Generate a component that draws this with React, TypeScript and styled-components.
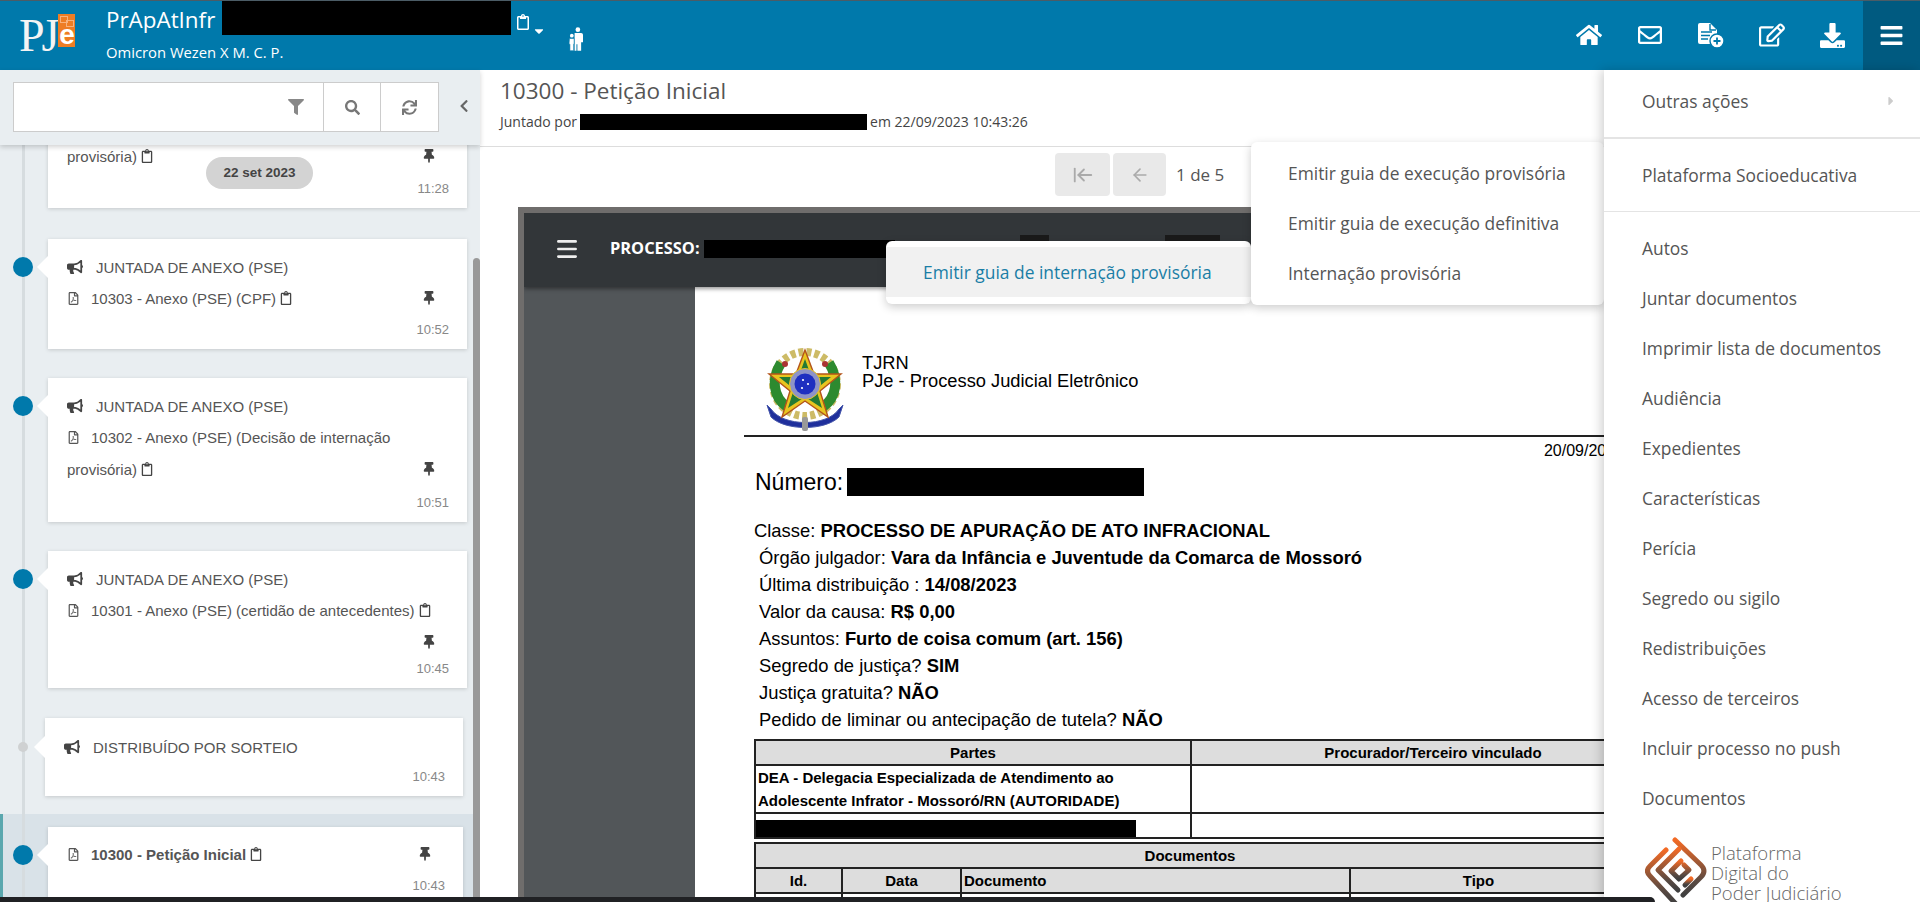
import React from "react";
import styled, { createGlobalStyle } from "styled-components";
import {
  FaHome, FaRegEnvelope, FaRegEdit, FaDownload, FaBars, FaFilter, FaSearch, FaSync,
  FaChevronLeft, FaRegClipboard, FaBullhorn, FaThumbtack, FaRegFilePdf, FaCaretDown, FaCaretRight,
} from "react-icons/fa";
import { ArrowLeft, ArrowLeftToLine, Menu } from "lucide-react";

const Global = createGlobalStyle`
  html, body { margin: 0; padding: 0; height: 100%; overflow: hidden; background: #fff; }
  * { box-sizing: border-box; }
  body { font-family: "Open Sans", "Liberation Sans", sans-serif; color: #555; }
`;

const Page = styled.div`
  position: relative; width: 1920px; height: 902px; overflow: hidden; display: flex; flex-direction: column;
`;
const Header = styled.header`
  flex: 0 0 70px; display: flex; background: #0079ab; border-top: 1px solid #4b5c66; color: #fff;
`;
const LogoBox = styled.div`
  width: 106px; padding: 13px 0 0 19px; display: flex; align-items: flex-start;
`;
const LogoPJ = styled.span`
  font-family: "Liberation Serif", serif; font-size: 46px; line-height: 38px; letter-spacing: -3px; color: #f4f4f4; margin-top: 3px;
`;
const LogoE = styled.span`
  position: relative; margin-left: 2px; width: 17px; height: 33px; background: #ee7d24; color: #fff;
  font-family: "Liberation Sans", sans-serif; font-size: 28px; line-height: 42px; font-weight: 700; text-align: center; overflow: hidden;
  &::before { content: ""; position: absolute; left: 2px; top: 2px; width: 6px; height: 5px; border: 1px solid #f8b27c; }
  &::after { content: ""; position: absolute; left: 8px; top: 6px; width: 6px; height: 5px; border: 1px solid #f8b27c; }
`;
const TitleBlock = styled.div`
  display: flex; flex-direction: column;
`;
const TitleRow = styled.div`
  display: flex; align-items: flex-start; height: 34px;
`;
const Title = styled.span`
  width: 116px; font-size: 22.4px; line-height: 26px; padding-top: 6px; white-space: nowrap;
`;
const HeaderRedact = styled.div`
  width: 289px; height: 34px; background: #000;
`;
const ClipBtn = styled.div`
  margin: 13px 0 0 4px; display: flex; font-size: 16px; color: #fff;
`;
const Caret = styled.div`
  margin: 23px 0 0 1px; font-size: 14px; line-height: 14px; color: #fff;
`;
const ChildIcon = styled.svg`
  margin: 26px 0 0 23px; flex: none;
`;
const SubTitle = styled.div`
  font-size: 14.8px; line-height: 18px; margin-top: 8px; font-weight: 400;
`;
const HeaderIcons = styled.nav`
  margin-left: auto; display: flex;
`;
const HeaderIcon = styled.div<{ $size?: number }>`
  width: 61px; display: flex; align-items: center; justify-content: center; font-size: ${p => p.$size ?? 26}px; padding-bottom: 1px;
`;
const MenuButton = styled.div`
  width: 57px; background: #005a80; display: flex; align-items: center; justify-content: center; font-size: 25px;
`;
const Body = styled.div`
  flex: 1; display: flex; min-height: 0;
`;
const Sidebar = styled.aside`
  position: relative; width: 480px; background: #e9eef1; display: flex; flex-direction: column; flex: none;
`;
const SearchPanel = styled.div`
  position: relative; z-index: 2; flex: 0 0 75px; display: flex; align-items: flex-start; padding: 12px 0 0 13px;
  background: #e9eef1; box-shadow: 0 2px 5px rgba(0,0,0,.18);
`;
const SearchBox = styled.div`
  width: 426px; height: 50px; background: #fff; border: 1px solid #ccc; display: flex;
`;
const SearchInput = styled.div`
  flex: 1; display: flex; align-items: center; justify-content: flex-end; padding-right: 19px; color: #888; font-size: 16px;
`;
const SearchBtn = styled.div<{ $w: number }>`
  width: ${p => p.$w}px; border-left: 1px solid #ccc; display: flex; align-items: center; justify-content: center; color: #777; font-size: 15px;
`;
const Collapse = styled.div`
  margin: 17px 0 0 18px; color: #666; font-size: 14px; line-height: 14px;
`;
const Timeline = styled.div`
  position: relative; flex: 1; overflow: hidden; font-family: "Liberation Sans", sans-serif;
  &::before { content: ""; position: absolute; z-index: 1; left: 22px; top: 0; bottom: 0; width: 3px; background: #d6dcdf; }
`;
const Thumb = styled.div`
  position: absolute; z-index: 3; right: 0; top: 113px; bottom: -10px; width: 7px; background: #999; border-radius: 4px 4px 0 0;
`;
const Item = styled.div<{ $top: number; $left: number; $right?: number; $active?: boolean }>`
  position: relative; padding: ${p => p.$top}px ${p => p.$right ?? 13}px 0 ${p => p.$left}px;
  ${p => p.$active ? "background: #d9e2e8; padding-bottom: 40px; margin-right: 7px; padding-right: 10px; box-shadow: inset 3px 0 0 #5aa7ae;" : ""}
`;
const ItemSpacer = styled.div`
  height: 18px;
`;
const Dot = styled.span<{ $y: number; $small?: boolean }>`
  position: absolute; z-index: 2; left: ${p => p.$small ? 18 : 13}px; top: ${p => p.$y - (p.$small ? 5 : 10)}px;
  width: ${p => p.$small ? 10 : 20}px; height: ${p => p.$small ? 10 : 20}px; border-radius: 50%;
  background: ${p => p.$small ? "#cfd1d2" : "#0079ab"};
`;
const Card = styled.div<{ $pad?: number; $clip?: number }>`
  position: relative; background: #fff; box-shadow: 0 1px 4px rgba(0,0,0,.16);
  padding: ${p => p.$pad ?? 12}px 18px 10px 19px;
  margin-top: ${p => p.$clip ?? 0}px; color: #555;
  &::before {
    content: ""; position: absolute; left: -11px; top: ${p => (p.$pad ?? 12) + 4}px; width: 12px; height: 24px;
    background: #fff; clip-path: polygon(100% 0, 100% 100%, 0 50%);
  }
`;
const ClippedCard = styled(Card)`
  &::before { display: none; }
`;
const Heading = styled.div`
  height: 32px; display: flex; align-items: center; font-size: 15px; color: #555; white-space: nowrap;
  & > svg { font-size: 16px; color: #444; margin-right: 13px; flex: none; }
`;
const Doc = styled.div<{ $bold?: boolean }>`
  line-height: 32px; font-size: 15px; font-weight: ${p => p.$bold ? 700 : 400}; color: #555;
  display: flow-root;
`;
const PdfIcon = styled(FaRegFilePdf)`
  font-size: 13px; color: #555; margin-right: 11px; vertical-align: -1px;
`;
const ClipIcon = styled(FaRegClipboard)`
  font-size: 14px; color: #444; margin-left: 3px; vertical-align: -1px;
`;
const Pin = styled.span`
  float: right; margin-right: 13px; width: 14px; height: 32px; display: flex; align-items: center; justify-content: center; font-size: 14px; color: #444; padding-bottom: 2px;
`;
const Time = styled.div<{ $gap: number }>`
  margin-top: ${p => p.$gap}px; height: 18px; line-height: 18px; text-align: right; font-size: 13px; color: #888;
`;
const Pill = styled.div`
  position: absolute; z-index: 1; left: 206px; top: 12px; width: 107px; height: 32px; border-radius: 16px;
  background: #d3d3d3; color: #444; font-size: 13.5px; font-weight: 700; text-align: center; line-height: 32px;
`;
const Main = styled.main`
  flex: 1; min-width: 0; display: flex; flex-direction: column;
`;
const DocHeader = styled.div`
  flex: 0 0 77px; padding: 5px 0 0 20px; border-bottom: 1px solid #ddd;
`;
const DocTitle = styled.h1`
  margin: 0; font-size: 22.5px; line-height: 32px; font-weight: 400; color: #555;
`;
const DocMeta = styled.div`
  display: flex; align-items: center; margin-top: 7px; font-size: 14px; color: #444; line-height: 16px;
`;
const MetaRedact = styled.span`
  width: 287px; height: 16px; background: #000; margin: 0 3px 0 3px;
`;
const Pager = styled.div`
  flex: 0 0 60px; display: flex; align-items: flex-start; padding: 6px 0 0 575px;
`;
const PagerBtn = styled.div<{ $w: number }>`
  width: ${p => p.$w}px; height: 43px; margin-right: 3px; background: #e9e9e9; border-radius: 4px; color: #aaa;
  display: flex; align-items: center; justify-content: center;
`;
const PagerText = styled.span`
  margin-left: 7px; font-size: 17px; line-height: 43px; color: #555;
`;
const Frame = styled.div`
  flex: 1; min-height: 0; margin-left: 38px; margin-right: 40px; background: #525659;
  border-top: 6px solid #6f6d6c; border-left: 6px solid #6f6d6c; display: flex; flex-direction: column; overflow: hidden;
`;
const PdfToolbar = styled.div`
  position: relative; flex: 0 0 74px; background: #323639; display: flex; align-items: flex-start; padding-left: 30px; color: #fff;
  box-shadow: 0 2px 4px rgba(0,0,0,.4);
`;
const PdfMenu = styled(Menu)`
  color: #eee; margin: 23px 30px 0 0; flex: none;
`;
const PdfName = styled.span`
  font-weight: 700; font-size: 16.4px; line-height: 18px; margin-top: 26px;
`;
const PdfRedact = styled.span`
  width: 191px; height: 18px; background: #000; margin: 27px 0 0 4px;
`;
const PdfBlock = styled.span<{ $w: number; $left: number }>`
  width: ${p => p.$w}px; height: 20px; background: #1a1a1a; margin: 22px 0 0 ${p => p.$left}px;
`;
const PdfBody = styled.div`
  flex: 1; min-height: 0; padding-left: 171px; overflow: hidden;
`;
const Sheet = styled.div`
  background: #fff; height: 100%; padding: 60px 0 0 49px; color: #000; font-family: "Liberation Sans", Arial, sans-serif; overflow: hidden;
`;
const SheetHead = styled.div`
  height: 90px; padding-left: 21px; display: flex; border-bottom: 2px solid #222;
`;
const SheetOrg = styled.div`
  margin: 7px 0 0 17px; font-size: 18.3px; line-height: 18px;
`;
const Date2 = styled.div`
  text-align: right; font-size: 16px; line-height: 18px; margin-top: 5px; width: 880px;
`;
const Numero = styled.div`
  display: flex; align-items: center; margin: 8px 0 0 11px; height: 28px; font-size: 23px;
`;
const NumRedact = styled.span`
  width: 297px; height: 28px; background: #000; margin-left: 4px;
`;
const Fields = styled.div`
  margin-top: 21px; font-size: 18.4px; line-height: 27px; white-space: nowrap;
`;
const Field = styled.div<{ $x: number }>`
  padding-left: ${p => p.$x}px;
`;
const DataTable = styled.table<{ $w: number }>`
  border-collapse: collapse; table-layout: fixed; width: ${p => p.$w}px; margin-left: 10px; font-size: 15px; font-weight: 700;
  th, td { border: 2px solid #222; padding: 0 2px; line-height: 23px; }
  th { background: #ddd; text-align: center; height: 25px; }
`;
const TablePartes = styled(DataTable)`
  margin-top: 6px;
`;
const TableDocs = styled(DataTable)`
  margin-top: 3px;
`;
const LeftTh = styled.th`
  && { text-align: left; }
`;
const TipoTh = styled.th`
  && { padding-right: 20px; }
`;
const DocCell = styled.td<{ $center?: boolean }>`
  && { font-weight: 400; text-align: ${p => p.$center ? "center" : "left"}; }
`;
const RowRedact = styled.div`
  width: 380px; height: 17px; background: #000; margin: 6px 0 0 -2px;
`;
const SideMenu = styled.div`
  position: absolute; z-index: 10; left: 1604px; top: 70px; width: 316px; height: 832px; background: #fff;
  box-shadow: -3px 0 10px rgba(0,0,0,.18);
`;
const MenuItem = styled.div`
  height: 50px; display: flex; align-items: center; padding: 0 20px 0 38px; font-size: 17.4px; color: #555; position: relative;
`;
const MenuSection = styled.div<{ $line: number; $h: number; $pad: number }>`
  padding-top: ${p => p.$pad}px; border-bottom: ${p => p.$line}px solid #e4e4e4; height: ${p => p.$h}px;
`;
const MenuList = styled.div`
  padding-top: 11px;
`;
const Arrow = styled(FaCaretRight)`
  margin-left: auto; margin-right: 2px; color: #ccc; font-size: 14px;
`;
const Flyout = styled.div<{ $left: number; $top: number; $w: number; $h: number; $z: number }>`
  position: absolute; z-index: ${p => p.$z}; left: ${p => p.$left}px; top: ${p => p.$top}px; width: ${p => p.$w}px; height: ${p => p.$h}px;
  background: #fff; border-radius: 6px; padding-top: 6px; box-shadow: 0 3px 10px rgba(0,0,0,.2); overflow: hidden;
`;
const FlyItem = styled.div<{ $active?: boolean }>`
  height: 50px; display: flex; align-items: center; padding-left: 37px; font-size: 17.4px;
  color: ${p => p.$active ? "#1a7ea6" : "#555"}; background: ${p => p.$active ? "#f1f1f1" : "transparent"};
`;
const Brand = styled.div`
  display: flex; margin: 14px 0 0 41px; align-items: flex-start;
`;
const BrandText = styled.div`
  margin: 6px 0 0 4px; font-size: 18.5px; line-height: 20px; font-weight: 300; color: #666;
`;
const BottomBar = styled.div`
  position: absolute; z-index: 20; left: 0; bottom: 0; width: 1655px; height: 5px; background: #202124; border-radius: 0 6px 0 0;
`;

const Arms = () => (
  <svg width="80" height="86" viewBox="0 0 80 86" style={{ flex: "none" }}>
    <circle cx="40" cy="37" r="32" fill="none" stroke="#cdbb66" strokeWidth="8" strokeDasharray="5 3" />
    <path d="M16 16 C6 32 8 50 22 60" fill="none" stroke="#2d8a2f" strokeWidth="10" />
    <path d="M64 16 C74 32 72 50 58 60" fill="none" stroke="#2d8a2f" strokeWidth="10" />
    <circle cx="20" cy="17" r="3" fill="#a33" /><circle cx="60" cy="17" r="3" fill="#a33" />
    <path d="M6 62 C18 80 62 80 74 62 L78 58 L74 70 C60 84 20 84 6 70 L2 58 Z" fill="#1f2f9c" stroke="#4455aa" />
    <path d="M40 3 L49 27 L76 27 L55 44 L63 70 L40 54 L17 70 L25 44 L4 27 L31 27 Z" fill="#e8c51f" stroke="#b3541a" strokeWidth="1.4" />
    <path d="M40 12 L46.5 30 L66 30 L51 42 L57 61 L40 50 L23 61 L29 42 L14 30 L33.5 30 Z" fill="#247a34" />
    <circle cx="40" cy="37" r="15.5" fill="#8d93c8" stroke="#e8c51f" />
    <circle cx="40" cy="37" r="10.5" fill="#1e2fc0" />
    <circle cx="38" cy="33" r="1.1" fill="#fff" /><circle cx="43" cy="37" r="1.1" fill="#fff" /><circle cx="37" cy="41" r="1.1" fill="#fff" />
    <rect x="37" y="70" width="6" height="14" rx="2" fill="#999" />
  </svg>
);

const Family = () => (
  <ChildIcon width="14" height="24" viewBox="0 0 15 25" fill="#fff">
    <circle cx="9.5" cy="2.5" r="2.5" />
    <path d="M6 6 H13 Q15 6 15 8 V16 H13 V25 H9 V18 H8 V25 H6 V9 Z" />
    <circle cx="3" cy="9" r="2" />
    <path d="M0.5 12 H5.5 V18 H5 V25 H1 V18 H0 Z" stroke="#0079ab" strokeWidth=".6" />
  </ChildIcon>
);

const FileAdd = () => (
  <svg width="26" height="25" viewBox="0 0 26 25">
    <path d="M2 0 H12 L19 7 V21 H2 Q0 21 0 19 V2 Q0 0 2 0 Z" fill="#fff" />
    <path d="M12 1 V7 H18" fill="none" stroke="#0079ab" strokeWidth="1.4" />
    <path d="M3 9 H14 M3 12.5 H12 M3 16 H10" stroke="#0079ab" strokeWidth="1.6" />
    <circle cx="19" cy="18" r="7" fill="#fff" stroke="#0079ab" strokeWidth="1.4" />
    <path d="M19 14.5 V21.5 M15.5 18 H22.5" stroke="#0079ab" strokeWidth="1.8" />
  </svg>
);

const PdpjLogo = () => (
  <svg width="62" height="70" viewBox="0 0 62 70" style={{ flex: "none" }}>
    <defs>
      <linearGradient id="pdpj" x1="0" y1="0" x2="0" y2="1">
        <stop offset="0" stopColor="#f26a25" />
        <stop offset=".75" stopColor="#5a4a42" />
        <stop offset="1" stopColor="#3f3f3f" />
      </linearGradient>
    </defs>
    <g fill="none" stroke="url(#pdpj)" strokeWidth="5" strokeLinejoin="round" strokeLinecap="round">
      <path d="M30 3 L56 28 Q62 34 56 40 L38 58" />
      <path d="M21 13 L5 29 Q0 34 5 39 L30 66" />
      <path d="M34 12 L22 24 L13 33 L33 53" />
      <path d="M36 24 L26 34 L34 42 L44 33 L39 28" />
      <path d="M46 42 L40 48" />
    </g>
  </svg>
);

const TimelineHeading = ({ children }: { children: React.ReactNode }) => (
  <Heading><FaBullhorn />{children}</Heading>
);

const DocLine = ({ text, bold }: { text: string; bold?: boolean }) => (
  <Doc $bold={bold}>
    <PdfIcon />{text}<ClipIcon />
    <Pin><FaThumbtack /></Pin>
  </Doc>
);

const menuItems = [
  "Autos", "Juntar documentos", "Imprimir lista de documentos", "Audiência", "Expedientes", "Características",
  "Perícia", "Segredo ou sigilo", "Redistribuições", "Acesso de terceiros", "Incluir processo no push", "Documentos",
];

export default function App() {
  return (
    <Page>
      <Global />
      <Header>
        <LogoBox><LogoPJ>PJ</LogoPJ><LogoE>e</LogoE></LogoBox>
        <TitleBlock>
          <TitleRow>
            <Title>PrApAtInfr</Title>
            <HeaderRedact />
            <ClipBtn><FaRegClipboard /></ClipBtn>
            <Caret><FaCaretDown /></Caret>
            <Family />
          </TitleRow>
          <SubTitle>Omicron Wezen X M. C. P.</SubTitle>
        </TitleBlock>
        <HeaderIcons>
          <HeaderIcon><FaHome /></HeaderIcon>
          <HeaderIcon $size={24}><FaRegEnvelope /></HeaderIcon>
          <HeaderIcon><FileAdd /></HeaderIcon>
          <HeaderIcon><FaRegEdit /></HeaderIcon>
          <HeaderIcon $size={25}><FaDownload /></HeaderIcon>
        </HeaderIcons>
        <MenuButton><FaBars /></MenuButton>
      </Header>
      <Body>
        <Sidebar>
          <SearchPanel>
            <SearchBox>
              <SearchInput><FaFilter /></SearchInput>
              <SearchBtn $w={57}><FaSearch /></SearchBtn>
              <SearchBtn $w={58}><FaSync /></SearchBtn>
            </SearchBox>
            <Collapse><FaChevronLeft /></Collapse>
          </SearchPanel>
          <Timeline>
            <Thumb />
            <Pill>22 set 2023</Pill>
            <Item $top={0} $left={48}>
              <ClippedCard $pad={0} $clip={-4}>
                <Doc>provisória)<ClipIcon /><Pin><FaThumbtack /></Pin></Doc>
                <Time $gap={7}>11:28</Time>
              </ClippedCard>
            </Item>
            <Item $top={31} $left={48}>
              <Dot $y={59} />
              <Card>
                <TimelineHeading>JUNTADA DE ANEXO (PSE)</TimelineHeading>
                <DocLine text="10303 - Anexo (PSE) (CPF)" />
                <Time $gap={6}>10:52</Time>
              </Card>
            </Item>
            <Item $top={29} $left={48}>
              <Dot $y={57} />
              <Card>
                <TimelineHeading>JUNTADA DE ANEXO (PSE)</TimelineHeading>
                <DocLine text="10302 - Anexo (PSE) (Decisão de internação provisória)" />
                <Time $gap={8}>10:51</Time>
              </Card>
            </Item>
            <Item $top={29} $left={48}>
              <Dot $y={57} />
              <Card>
                <TimelineHeading>JUNTADA DE ANEXO (PSE)</TimelineHeading>
                <DocLine text="10301 - Anexo (PSE) (certidão de antecedentes)" />
                <Time $gap={1}>10:45</Time>
              </Card>
            </Item>
            <Item $top={30} $left={45} $right={17}>
              <Dot $y={59} $small />
              <Card $pad={13}>
                <TimelineHeading>DISTRIBUÍDO POR SORTEIO</TimelineHeading>
                <Time $gap={5}>10:43</Time>
              </Card>
            </Item>
            <ItemSpacer />
            <Item $top={13} $left={48} $active>
              <Dot $y={41} />
              <Card>
                <DocLine text="10300 - Petição Inicial" bold />
                <Time $gap={6}>10:43</Time>
              </Card>
            </Item>
          </Timeline>
        </Sidebar>
        <Main>
          <DocHeader>
            <DocTitle>10300 - Petição Inicial</DocTitle>
            <DocMeta>Juntado por<MetaRedact />em 22/09/2023 10:43:26</DocMeta>
          </DocHeader>
          <Pager>
            <PagerBtn $w={55}><ArrowLeftToLine size={22} /></PagerBtn>
            <PagerBtn $w={53}><ArrowLeft size={20} /></PagerBtn>
            <PagerText>1 de 5</PagerText>
          </Pager>
          <Frame>
            <PdfToolbar>
              <PdfMenu size={26} strokeWidth={2.4} />
              <PdfName>PROCESSO:</PdfName>
              <PdfRedact />
              <PdfBlock $w={29} $left={125} />
              <PdfBlock $w={55} $left={116} />
            </PdfToolbar>
            <PdfBody>
              <Sheet>
                <SheetHead>
                  <Arms />
                  <SheetOrg>TJRN<br />PJe - Processo Judicial Eletrônico</SheetOrg>
                </SheetHead>
                <Date2>20/09/2023</Date2>
                <Numero>Número:<NumRedact /></Numero>
                <Fields>
                  <Field $x={10}>Classe: <b>PROCESSO DE APURAÇÃO DE ATO INFRACIONAL</b></Field>
                  <Field $x={15}>Órgão julgador: <b>Vara da Infância e Juventude da Comarca de Mossoró</b></Field>
                  <Field $x={15}>Última distribuição : <b>14/08/2023</b></Field>
                  <Field $x={15}>Valor da causa: <b>R$ 0,00</b></Field>
                  <Field $x={15}>Assuntos: <b>Furto de coisa comum (art. 156)</b></Field>
                  <Field $x={15}>Segredo de justiça? <b>SIM</b></Field>
                  <Field $x={15}>Justiça gratuita? <b>NÃO</b></Field>
                  <Field $x={15}>Pedido de liminar ou antecipação de tutela? <b>NÃO</b></Field>
                </Fields>
                <TablePartes $w={922}>
                  <colgroup><col width="436" /><col /></colgroup>
                  <thead><tr><th>Partes</th><th>Procurador/Terceiro vinculado</th></tr></thead>
                  <tbody>
                    <tr><td>DEA - Delegacia Especializada de Atendimento ao Adolescente Infrator - Mossoró/RN (AUTORIDADE)</td><td /></tr>
                    <tr><td><RowRedact /></td><td /></tr>
                  </tbody>
                </TablePartes>
                <TableDocs $w={872}>
                  <colgroup><col width="87" /><col width="119" /><col width="389" /><col /></colgroup>
                  <thead>
                    <tr><th colSpan={4}>Documentos</th></tr>
                    <tr><th>Id.</th><th>Data</th><LeftTh>Documento</LeftTh><TipoTh>Tipo</TipoTh></tr>
                  </thead>
                  <tbody>
                    <tr>
                      <DocCell>10300</DocCell>
                      <DocCell>14/08/2023</DocCell>
                      <DocCell />
                      <DocCell $center>Petição Inicial</DocCell>
                    </tr>
                  </tbody>
                </TableDocs>
              </Sheet>
            </PdfBody>
          </Frame>
        </Main>
      </Body>

      <SideMenu>
        <MenuSection $line={2} $h={69} $pad={6}>
          <MenuItem>Outras ações<Arrow /></MenuItem>
        </MenuSection>
        <MenuSection $line={1} $h={73} $pad={11}>
          <MenuItem>Plataforma Socioeducativa</MenuItem>
        </MenuSection>
        <MenuList>
          {menuItems.map(m => <MenuItem key={m}>{m}</MenuItem>)}
        </MenuList>
        <Brand>
          <PdpjLogo />
          <BrandText>Plataforma<br />Digital do<br />Poder Judiciário</BrandText>
        </Brand>
      </SideMenu>
      <Flyout $left={1251} $top={142} $w={353} $h={163} $z={9}>
        <FlyItem>Emitir guia de execução provisória</FlyItem>
        <FlyItem>Emitir guia de execução definitiva</FlyItem>
        <FlyItem>Internação provisória</FlyItem>
      </Flyout>
      <Flyout $left={886} $top={241} $w={365} $h={63} $z={8}>
        <FlyItem $active>Emitir guia de internação provisória</FlyItem>
      </Flyout>
      <BottomBar />
    </Page>
  );
}
